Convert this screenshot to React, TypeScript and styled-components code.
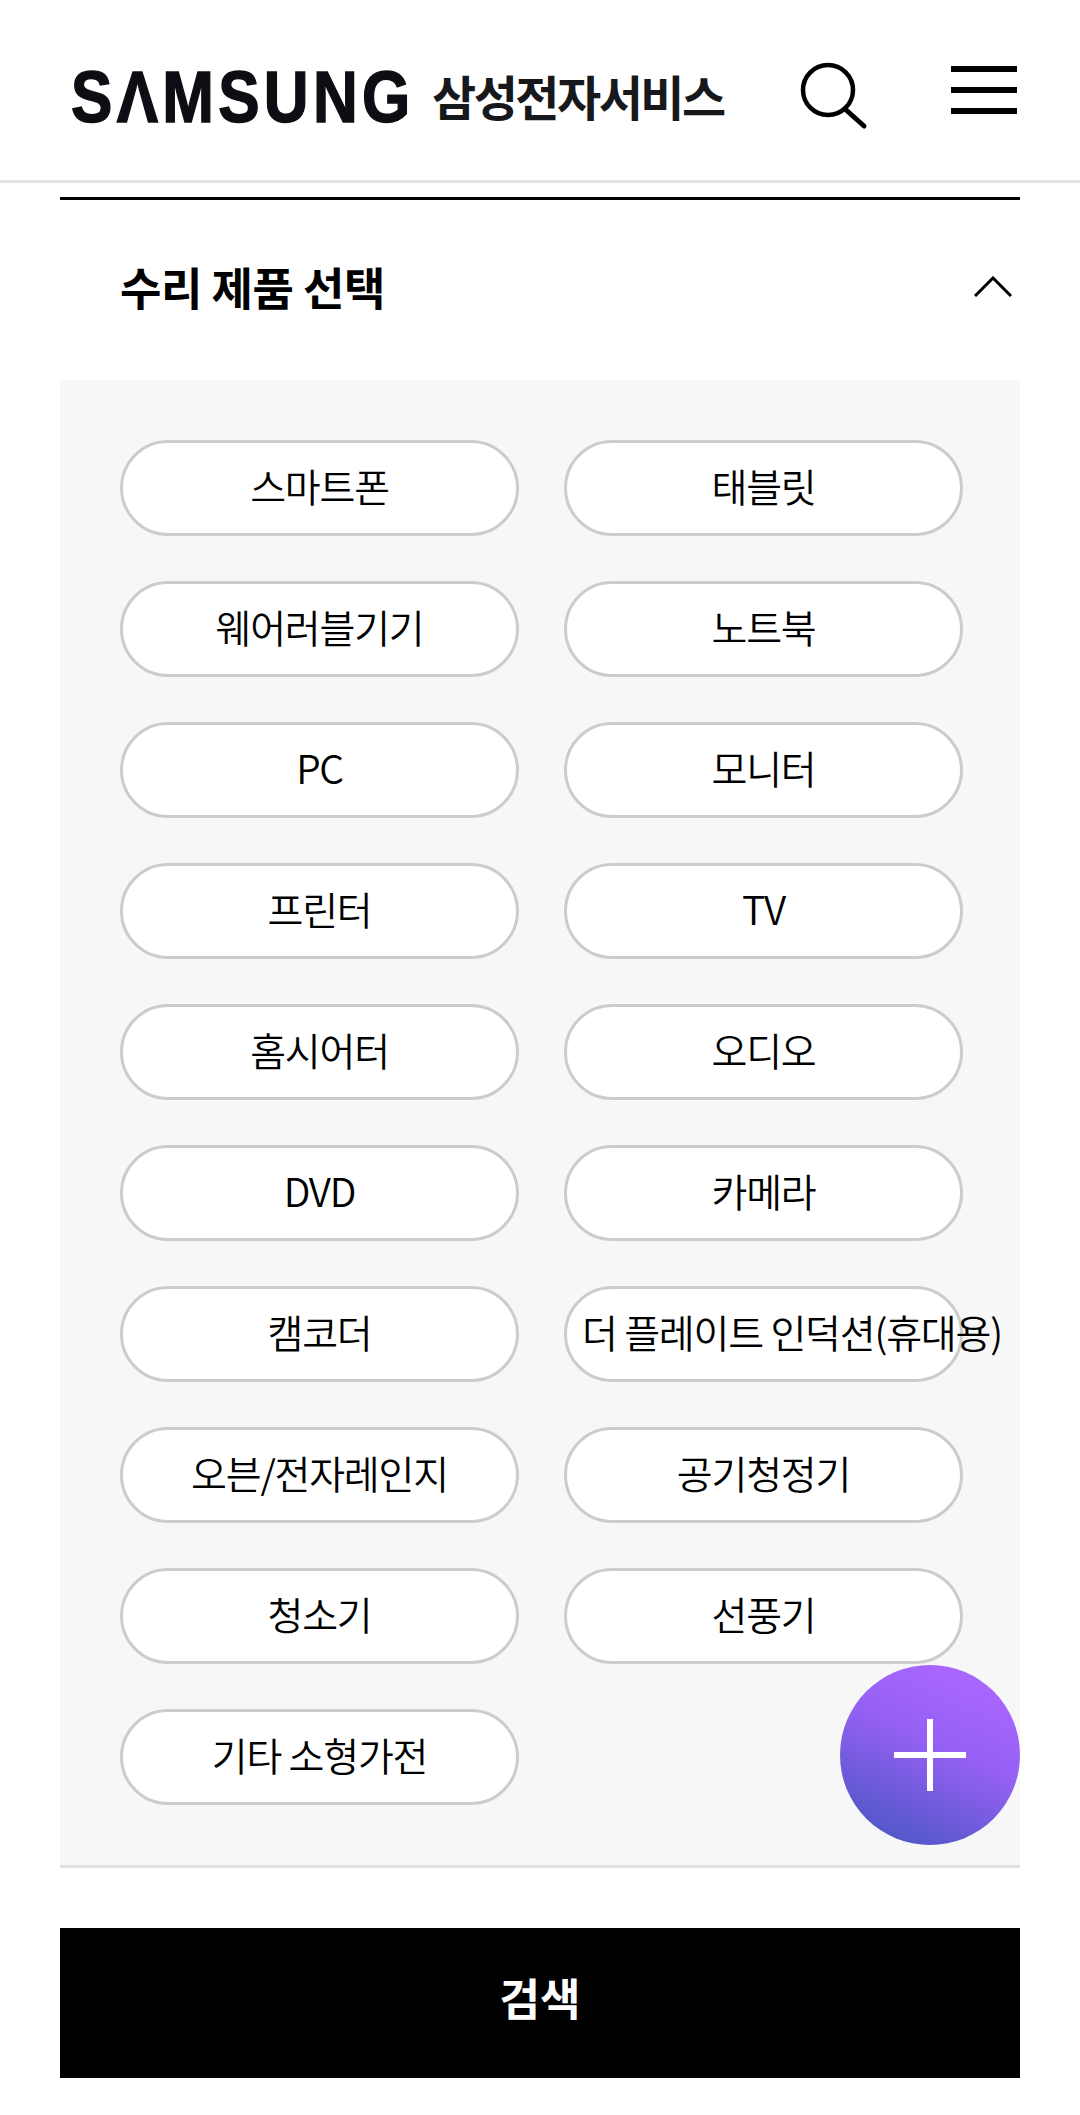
import React from 'react';
import styled, { createGlobalStyle } from 'styled-components';

const GlobalStyle = createGlobalStyle`
  html, body {
    margin: 0;
    padding: 0;
    background: #fff;
  }

  * {
    box-sizing: border-box;
  }

  body {
    font-family: 'Noto Sans CJK KR', 'Noto Sans', sans-serif;
    color: #000;
  }
`;

const Page = styled.div`
  position: relative;
  width: 1080px;
  height: 2115px;
  overflow: hidden;
`;

const Header = styled.header`
  display: flex;
  align-items: center;
  height: 183px;
  padding: 0 63px 0 71px;
  border-bottom: 3px solid #e3e3e3;
`;

const Logo = styled.div`
  display: flex;
  align-items: center;
  flex: 1;
  height: 100%;
`;

const LogoMark = styled.span`
  display: block;
  width: 337px;
  margin-top: 13px;
  margin-right: 24px;
  font-family: 'Liberation Sans', sans-serif;
  font-weight: 700;
  font-size: 73px;
  line-height: 1;
  letter-spacing: 5px;
  color: #0c0e14;
  -webkit-text-stroke: 1.5px #0c0e14;
  white-space: nowrap;
  transform: scaleX(0.85);
  transform-origin: left center;
`;

const LogoText = styled.span`
  font-weight: 700;
  font-size: 48px;
  line-height: 1;
  letter-spacing: -2.5px;
  color: #17181c;
  white-space: nowrap;
  margin-top: 10px;
`;

const SearchButton = styled.button`
  display: block;
  width: 68px;
  height: 68px;
  padding: 0;
  margin-top: 12px;
  margin-right: 83px;
  border: none;
  background: none;
`;

const MenuButton = styled.button`
  display: flex;
  flex-direction: column;
  justify-content: space-between;
  width: 66px;
  height: 48px;
  padding: 0;
  border: none;
  background: none;

  span {
    display: block;
    height: 6px;
    background: #000;
  }
`;

const Main = styled.main`
  padding: 14px 60px 0;
`;

const Section = styled.section`
  border-top: 3px solid #000;
  border-bottom: 3px solid #e0e0e0;
`;

const SectionHead = styled.div`
  display: flex;
  align-items: center;
  justify-content: space-between;
  height: 180px;
  padding: 0 8px 7px 60px;
`;

const SectionTitle = styled.h2`
  margin: 0;
  font-size: 45px;
  font-weight: 700;
  letter-spacing: -0.5px;
  line-height: 1;
`;

const Panel = styled.div`
  display: grid;
  grid-template-columns: 399px 399px;
  grid-auto-rows: 96px;
  column-gap: 45px;
  row-gap: 45px;
  height: 1485px;
  padding: 60px;
  background: #f7f7f7;
`;

const Pill = styled.div`
  height: 96px;
  padding: 0 15px;
  border: 3px solid #cccccc;
  border-radius: 48px;
  background: #fff;
  font-size: 39px;
  font-weight: 350;
  letter-spacing: -1.2px;
  line-height: 84px;
  text-align: center;
  white-space: nowrap;
`;

const SearchSubmit = styled.button`
  display: block;
  width: 100%;
  height: 150px;
  margin-top: 60px;
  padding: 0 0 12px;
  border: none;
  background: #000;
  color: #fff;
  font-family: inherit;
  font-size: 44px;
  font-weight: 700;
`;

const Fab = styled.button`
  position: absolute;
  left: 840px;
  top: 1665px;
  display: flex;
  align-items: center;
  justify-content: center;
  width: 180px;
  height: 180px;
  padding: 0;
  border: none;
  border-radius: 50%;
  background: linear-gradient(205deg, #a966ff 15%, #9560f3 45%, #5057c6 90%);
`;

const products = [
  '스마트폰',
  '태블릿',
  '웨어러블기기',
  '노트북',
  'PC',
  '모니터',
  '프린터',
  'TV',
  '홈시어터',
  '오디오',
  'DVD',
  '카메라',
  '캠코더',
  '더 플레이트 인덕션(휴대용)',
  '오븐/전자레인지',
  '공기청정기',
  '청소기',
  '선풍기',
  '기타 소형가전',
];

export default function App() {
  return (
    <Page>
      <GlobalStyle />
      <Header>
        <Logo>
          <LogoMark>SΛMSUNG</LogoMark>
          <LogoText>삼성전자서비스</LogoText>
        </Logo>
        <SearchButton aria-label="검색">
          <svg width="68" height="68" viewBox="0 0 68 68" fill="none" stroke="#000" strokeWidth="4.5">
            <circle cx="28" cy="28" r="25" />
            <path d="M45 47 L64 64" strokeLinecap="round" strokeWidth="5" />
          </svg>
        </SearchButton>
        <MenuButton aria-label="메뉴">
          <span />
          <span />
          <span />
        </MenuButton>
      </Header>
      <Main>
        <Section>
          <SectionHead>
            <SectionTitle>수리 제품 선택</SectionTitle>
            <svg width="38" height="21" viewBox="0 0 38 21" fill="none" stroke="#000" strokeWidth="3">
              <path d="M1 20 L19 2 L37 20" />
            </svg>
          </SectionHead>
          <Panel>
            {products.map(name => (
              <Pill key={name}>{name}</Pill>
            ))}
          </Panel>
        </Section>
        <SearchSubmit>검색</SearchSubmit>
      </Main>
      <Fab aria-label="추가">
        <svg width="72" height="72" viewBox="0 0 72 72" fill="#fff">
          <rect x="33" y="0" width="6" height="72" />
          <rect x="0" y="33" width="72" height="6" />
        </svg>
      </Fab>
    </Page>
  );
}
